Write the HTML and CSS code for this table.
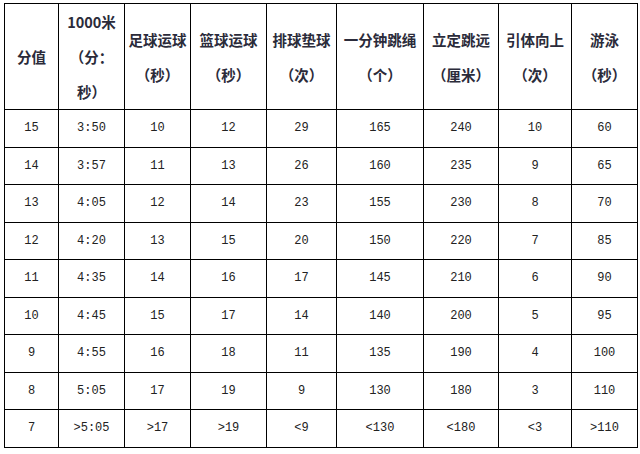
FILE: index.html
```html
<!DOCTYPE html>
<html lang="zh">
<head>
<meta charset="utf-8">
<link rel="stylesheet" href="styles.css">
</head>
<body>
<table class="score">
  <colgroup>
    <col class="c1"><col class="c2"><col class="c3"><col class="c4"><col class="c5"><col class="c6"><col class="c7"><col class="c8"><col class="c9">
  </colgroup>
  <thead>
    <tr>
      <th>分值</th>
      <th>1000米<br>（分：<br>秒）</th>
      <th>足球运球<br>（秒）</th>
      <th>篮球运球<br>（秒）</th>
      <th>排球垫球<br>（次）</th>
      <th>一分钟跳绳<br>（个）</th>
      <th>立定跳远<br>（厘米）</th>
      <th>引体向上<br>（次）</th>
      <th>游泳<br>（秒）</th>
    </tr>
  </thead>
  <tbody>
    <tr><td>15</td><td>3:50</td><td>10</td><td>12</td><td>29</td><td>165</td><td>240</td><td>10</td><td>60</td></tr>
    <tr><td>14</td><td>3:57</td><td>11</td><td>13</td><td>26</td><td>160</td><td>235</td><td>9</td><td>65</td></tr>
    <tr><td>13</td><td>4:05</td><td>12</td><td>14</td><td>23</td><td>155</td><td>230</td><td>8</td><td>70</td></tr>
    <tr><td>12</td><td>4:20</td><td>13</td><td>15</td><td>20</td><td>150</td><td>220</td><td>7</td><td>85</td></tr>
    <tr><td>11</td><td>4:35</td><td>14</td><td>16</td><td>17</td><td>145</td><td>210</td><td>6</td><td>90</td></tr>
    <tr><td>10</td><td>4:45</td><td>15</td><td>17</td><td>14</td><td>140</td><td>200</td><td>5</td><td>95</td></tr>
    <tr><td>9</td><td>4:55</td><td>16</td><td>18</td><td>11</td><td>135</td><td>190</td><td>4</td><td>100</td></tr>
    <tr><td>8</td><td>5:05</td><td>17</td><td>19</td><td>9</td><td>130</td><td>180</td><td>3</td><td>110</td></tr>
    <tr><td>7</td><td>&gt;5:05</td><td>&gt;17</td><td>&gt;19</td><td>&lt;9</td><td>&lt;130</td><td>&lt;180</td><td>&lt;3</td><td>&gt;110</td></tr>
  </tbody>
</table>
</body>
</html>
```
FILE: styles.css
```css
html, body {
  margin: 0;
  background: #ffffff;
}
body {
  padding: 3px 0 0 4px;
  font-family: "Liberation Sans", "Noto Sans CJK SC", sans-serif;
}
.score {
  border-collapse: collapse;
  table-layout: fixed;
  width: 633px;
}
.score th, .score td {
  border: 1px solid #000;
  padding: 0;
  text-align: center;
  vertical-align: middle;
}
.score th {
  height: 105px;
  font-family: "Noto Sans CJK SC", sans-serif;
  font-weight: 700;
  font-size: 14.5px;
  line-height: 35px;
  color: #2b2b3a;
}
.score td {
  height: 36.5px;
  font-family: "Liberation Mono", monospace;
  font-size: 12px;
  color: #222;
}
.c1 { width: 54px; }
.c2 { width: 66px; }
.c3 { width: 66px; }
.c4 { width: 76px; }
.c5 { width: 70px; }
.c6 { width: 87px; }
.c7 { width: 75px; }
.c8 { width: 73px; }
.c9 { width: 66px; }
```
